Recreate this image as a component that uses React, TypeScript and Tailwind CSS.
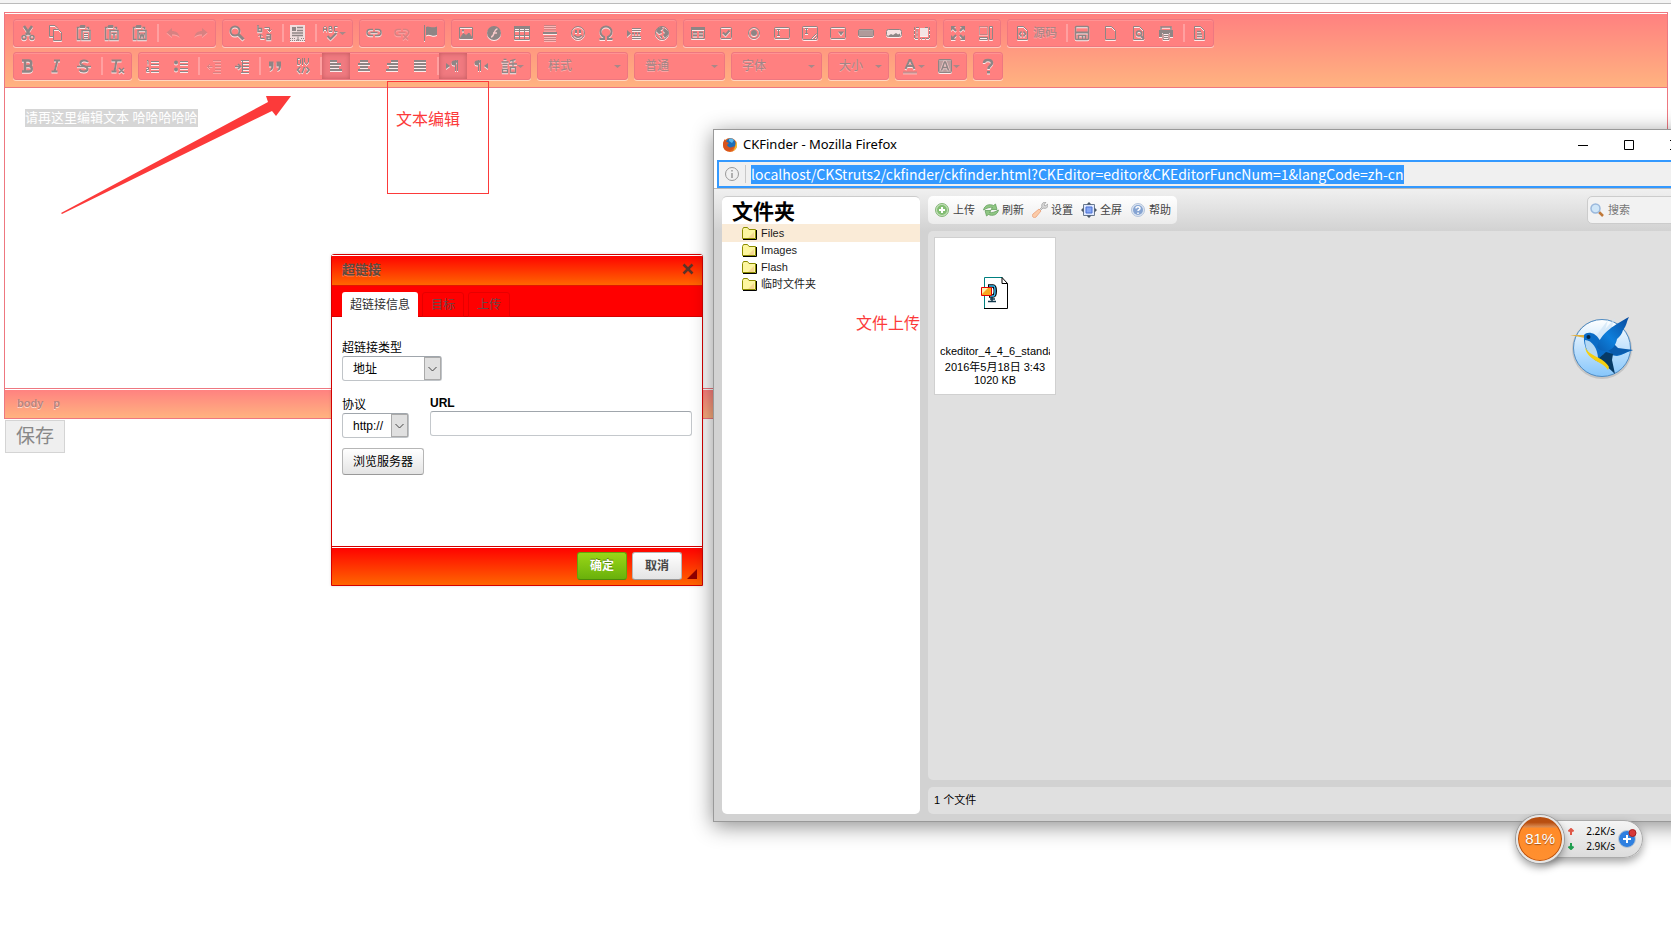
import { ReactNode } from "react";
import clsx from "clsx";

type IconName = keyof typeof glyphs;

const page = <path d="M3.500 1.500h6l4 4v9h-10z" />;
const clipboard = (
  <>
    <path d="M3.500 2.500h-2v12h3M10.500 2.500h2v2" strokeWidth="1.500" />
    <path d="M5 .5h4v2H4V1z" fill="currentColor" />
    <path d="M6 5.500h8v9H6z" strokeWidth="1.500" />
  </>
);
// text-alignment bars: [x, width] for each of the four rows
const bars = (rows: [number, number][]) =>
  rows.map(([x, w], i) => (
    <rect key={i} x={x} y={2 + i * 3} width={w} height={2} fill="currentColor" stroke="none" />
  ));

const glyphs = {
  cut: (
    <>
      <path d="M4 1l6 9M12 1L6 10" strokeWidth="2.500" />
      <circle cx="4" cy="12.500" r="2" strokeWidth="1.500" />
      <circle cx="12" cy="12.500" r="2" strokeWidth="1.500" />
    </>
  ),
  copy: (
    <>
      <path d="M5 11.500H1.500V.5H7l3 3" />
      <path d="M5.500 4.500h5l3 3v8h-8z" />
    </>
  ),
  paste: (
    <>
      {clipboard}
      <path d="M8 8.500h4M8 10.500h4M8 12.500h4" />
    </>
  ),
  pasteText: (
    <>
      {clipboard}
      <path d="M7.500 8.500h5M10 8.500v5" strokeWidth="1.500" />
    </>
  ),
  pasteWord: (
    <>
      {clipboard}
      <path d="M7.500 8l1.200 4.500L10 9l1.300 3.500L12.500 8" strokeWidth="1.300" />
    </>
  ),
  undo: <path d="M7 3v3c4 0 7 2 7.500 6C13 10 10 9.500 7 9.500V12L1.500 7.500z" fill="currentColor" stroke="none" />,
  redo: <path d="M9 3v3c-4 0-7 2-7.500 6C3 10 6 9.500 9 9.500V12l5.500-4.500z" fill="currentColor" stroke="none" />,
  find: (
    <>
      <circle cx="6" cy="6" r="4.500" strokeWidth="2" />
      <path d="M9.500 9.500l5 5" strokeWidth="3" />
    </>
  ),
  replace: (
    <>
      <path d="M1 0v6.500h3.500v-3H1M9.500 9.500h4v5H10V12h3.500" strokeWidth="1.500" />
      <path d="M7.500 2.500h5v4M10.500 4.500l2 2 2-2M7.500 13.500h-4v-4M5.500 11l-2-2-2 2" />
    </>
  ),
  selectAll: (
    <>
      <path d="M0 0h15v16H0z" fill="#f0dede" stroke="none" />
      <path d="M2 2h4v4H2z" fill="currentColor" stroke="none" />
      <path d="M7 2.500h6M7 5.500h6M2 8h11M2 10.500h11" strokeWidth="1.500" />
      <path d="M8 11.500v4M6.500 15h3" />
      <path d="M0 15.500h15M0 13.500h5M11 13.500h4" strokeDasharray="1 1" />
    </>
  ),
  spell: (
    <>
      <path d="M.5 6.500v-4l1-1h1l1 1v4M.5 4.500h3M6 1.500v5M6 1.500h2.500v2H6h3v3H6M14.500 1.500h-3v5h3" />
      <path d="M4.500 11l3 3 6-6" strokeWidth="2" />
    </>
  ),
  link: (
    <>
      <path d="M7 4.500H4a3 3 0 000 6h3M9 4.500h3a3 3 0 010 6H9" strokeWidth="1.500" />
      <path d="M4.500 7.500h7" strokeWidth="1.500" />
    </>
  ),
  unlink: (
    <>
      <path d="M7 4.500H4a3 3 0 000 6h3M9 4.500h3a3 3 0 012 5M4.500 7.500h7" strokeWidth="1.500" />
      <path d="M9 9.500l5 5M14 9.500l-5 5" strokeWidth="1.500" />
    </>
  ),
  anchor: (
    <>
      <path d="M2.500 0v16" />
      <path d="M4 2c3-2 5 2 11-.5v8.500C10 12.500 8 8 4 10.500z" fill="currentColor" stroke="none" />
    </>
  ),
  image: (
    <>
      <path d="M1.500 2.500h13v11h-13z" />
      <path d="M2.500 12.500l3-4 2.500 2 3-2.500 3 4.500z" fill="currentColor" />
      <path d="M4 4.500h2v2H4z" fill="currentColor" stroke="none" />
    </>
  ),
  flash: (
    <>
      <circle cx="8" cy="8" r="7" fill="currentColor" stroke="none" />
      <path d="M11.500 4C7.500 4 8.500 12 5 12M7 8h4" stroke="#f6c8c8" strokeWidth="1.500" />
    </>
  ),
  table: (
    <>
      <path d="M.5 1.500h15v13H.5zM.5 5.500h15M.5 10.500h15M5.500 4v10.500M10.500 4v10.500" />
      <path d="M0 1h16v3H0z" fill="currentColor" stroke="none" />
    </>
  ),
  rule: (
    <>
      <path d="M2 .5h12M2 2.500h12M2 5h12M2 11.500h12M2 13.500h12M2 15.500h12" opacity=".5" />
      <path d="M1 8h14" strokeWidth="2" />
    </>
  ),
  smiley: (
    <>
      <circle cx="8" cy="8" r="6.500" />
      <path d="M5 5h2v3H5zM9 5h2v3H9z" fill="currentColor" stroke="none" />
      <path d="M4.500 10c1 3 6 3 7 0" strokeWidth="1.500" />
    </>
  ),
  omega: <path d="M1.500 14H6v-2C3 10.500 2.500 8.500 2.500 6.500a5.500 5 0 0111 0C13.500 8.500 13 10.500 10 12v2h4.500" strokeWidth="2" />,
  pageBreak: (
    <>
      <path d="M6 3.500h9M6 5.500h9M6 11.500h9M6 13.500h9" />
      <path d="M6 8.500h9" strokeDasharray="2 1" strokeWidth="2" />
      <path d="M1 5l4 3.500L1 12z" fill="currentColor" stroke="none" />
    </>
  ),
  globe: (
    <>
      <circle cx="8" cy="8" r="6.500" />
      <path d="M4 3l4-1.500L9 4 6.500 5.500 8 8 5 9 2 6zM10 3l4 3v4l-3 3-2-3 2-2-2-2zM5 10l3 1v3z" fill="currentColor" stroke="none" />
    </>
  ),
  form: (
    <>
      <path d="M1.500 2.500h13v11h-13z" />
      <path d="M1 2h14v3H1z" fill="currentColor" stroke="none" />
      <path d="M3 7.500h4M9 7.500h4M3 10.500h4M9 10.500h4" strokeWidth="2" />
    </>
  ),
  checkbox: (
    <>
      <rect x="2.500" y="2.500" width="11" height="11" rx="1" />
      <path d="M5 7.500l2.500 2.500L11.500 5.500" strokeWidth="2" />
    </>
  ),
  radio: (
    <>
      <circle cx="8" cy="8" r="5.500" />
      <circle cx="8" cy="8" r="3" fill="currentColor" stroke="none" />
    </>
  ),
  textField: (
    <>
      <rect x=".5" y="2.500" width="15" height="11" rx="1" />
      <path d="M3 4.500h3M4.500 4.500v6M3 10.500h3" />
    </>
  ),
  textarea: (
    <>
      <rect x=".5" y="1.500" width="15" height="13" rx="1" />
      <path d="M3 3.500h3M4.500 3.500v5M3 8.500h3M9.500 13.500l5-5M12.500 13.500l2-2" />
    </>
  ),
  selectField: (
    <>
      <rect x=".5" y="2.500" width="15" height="11" rx="1" />
      <path d="M8 6.500h6l-3 4z" fill="currentColor" stroke="none" />
    </>
  ),
  button: (
    <>
      <rect x=".5" y="4.500" width="15" height="7" rx="1.500" />
      <rect x="1" y="5" width="14" height="6" rx="1" fill="currentColor" stroke="none" opacity=".7" />
    </>
  ),
  imageButton: (
    <>
      <rect x=".5" y="4.500" width="15" height="7" rx="2" fill="#f6e3e3" />
      <path d="M2 11l3-2 2 1 3-2 2 1.500 2-1v2.500z" fill="currentColor" stroke="none" />
    </>
  ),
  hiddenField: (
    <>
      <path d="M5 2.500H.5v11H5M3 4.500v7M11 2.500h4.500v11H6" strokeDasharray="3 1" />
      <path d="M6 3h8v8H6z" fill="#f3e4e4" stroke="none" />
    </>
  ),
  maximize: (
    <>
      <path d="M2 2l4 4M14 2l-4 4M2 14l4-4M14 14l-4-4" strokeWidth="2" />
      <path d="M1 1h5L1 6zM15 1v5l-5-5zM1 15v-5l5 5zM15 15h-5l5-5z" fill="currentColor" stroke="none" />
    </>
  ),
  blocks: (
    <>
      <path d="M1.500 1.500h8v8h-8z" strokeDasharray="1 1" />
      <path d="M11.500 1.500h3v13h-3zM1.500 12.500h8v2h-8z" />
    </>
  ),
  source: (
    <>
      {page}
      <path d="M7.500 6.500L5.500 9l2 2.500M9.500 6.500l2 2.500-2 2.500" strokeWidth="1.500" />
    </>
  ),
  save: (
    <>
      <rect x="1.500" y="1.500" width="13" height="13" rx="1" strokeWidth="1.500" />
      <path d="M1 7.500h14" strokeWidth="2" />
      <path d="M4.500 14v-3.500h7V14M8.500 11v3" strokeWidth="1.500" />
    </>
  ),
  newPage: page,
  preview: (
    <>
      {page}
      <circle cx="9" cy="8.500" r="2.500" strokeWidth="1.500" />
      <path d="M11 11l3 3" strokeWidth="2" />
    </>
  ),
  print: (
    <>
      <path d="M3 5V2h10v3" strokeWidth="1.500" />
      <path d="M1 5h14v7h-3V8H4v4H1z" fill="currentColor" stroke="none" />
      <path d="M5 8.500h6v6H5zM6 10.500h4M6 12.500h4" />
    </>
  ),
  templates: (
    <>
      {page}
      <path d="M6 6.500h4M6 9h5M6 11.500h5" strokeWidth="1.500" />
    </>
  ),
  bold: <path d="M2 2.500h5M2 13.500h5M5 2.500v11M5 2.500h3.500a2.500 2.500 0 010 5.500H5h4a2.500 2.500 0 010 5.500H5" strokeWidth="2.500" />,
  italic: <path d="M6 2.500h6M3.500 13.500h6M9.500 2.500l-3 11" strokeWidth="2" />,
  strike: (
    <>
      <path d="M12 4C10 1.500 4 2 4.500 5.500 5 8 11.500 8 11.500 11S5 14.500 3.500 11.500" strokeWidth="2" />
      <path d="M1 8.500h14" strokeWidth="1.500" />
    </>
  ),
  removeFormat: (
    <>
      <path d="M2.500 2.500h10M7.500 2.500l-2 11M2.500 13.500h5" strokeWidth="2" />
      <path d="M10 10l5 5M15 10l-5 5" strokeWidth="1.500" />
    </>
  ),
  numbered: (
    <>
      <path d="M2 2.500h1v4M1.500 9.500h2v2h-2v2h3" />
      <path d="M6 3.500h8M6 6.500h8M6 10.500h8M6 13.500h8" />
    </>
  ),
  bulleted: (
    <>
      <circle cx="3" cy="4.500" r="2" fill="currentColor" stroke="none" />
      <circle cx="3" cy="11.500" r="2" fill="currentColor" stroke="none" />
      <path d="M7 3.500h8M7 6.500h8M7 10.500h8M7 13.500h8" />
    </>
  ),
  outdent: <path d="M7 2.500h8M9 5.500h6M9 8.500h6M9 11.500h6M7 14.500h8M6.500 8.500H1M4 6L1.500 8.500 4 11" />,
  indent: (
    <>
      <path d="M7 2.500h8M9 5.500h6M9 8.500h6M9 11.500h6M7 14.500h8M8.500 2v12" />
      <path d="M1 8.500h5M4 6l2.500 2.500L4 11" strokeWidth="1.500" />
    </>
  ),
  quote: (
    <path d="M2 3.500h4.500v4C6.500 11 5 12.500 2.500 13c1-1.500 1.800-2.500 1.800-4.500H2zM9.500 3.500H14v4c0 3.500-1.500 5-4 5.500 1-1.500 1.800-2.500 1.800-4.500H9.500z" fill="currentColor" stroke="none" />
  ),
  div: (
    <>
      <path d="M2.500.5h2l1 1v4l-1 1h-2zM7.500 0v7M9.500 0v4l2 2.500 2-2.500V0" />
      <path d="M5 9l-2.500 3L5 15M11.500 9l2.500 3-2.500 3M9.500 9l-2.500 6" strokeWidth="1.500" />
    </>
  ),
  left: bars([[2, 7], [2, 11], [2, 9], [2, 12]]),
  center: bars([[4, 8], [2, 12], [4, 8], [2, 12]]),
  right: bars([[7, 7], [3, 11], [5, 9], [2, 12]]),
  justify: bars([[2, 12], [2, 12], [2, 12], [2, 12]]),
  ltr: (
    <>
      <path d="M1 5l4 3-4 3z" fill="currentColor" stroke="none" />
      <path d="M13 2.500H9a2.500 2.500 0 000 5h1z" fill="currentColor" stroke="none" />
      <path d="M10.500 2v11M12.500 2v11" />
    </>
  ),
  rtl: (
    <>
      <path d="M15 5l-4 3 4 3z" fill="currentColor" stroke="none" />
      <path d="M8 2.500H4a2.500 2.500 0 000 5h1z" fill="currentColor" stroke="none" />
      <path d="M5.500 2v11M7.500 2v11" />
    </>
  ),
  language: (
    <path d="M2.500 1.500h3M.5 4h7M1.500 6.500h5M1.500 9h5M1.500 11.500h5v3h-5zM14.500 1.500L9 3M8 6h8M12 2.500v7M9.500 9.500h5v5h-5z" strokeWidth="1.300" />
  ),
  textColor: (
    <>
      <path d="M3.500 11L7.500 2h1l4 9M5.500 8h5" strokeWidth="2" />
      <path d="M1 14.500h14" strokeWidth="2" opacity=".5" />
    </>
  ),
  bgColor: (
    <>
      <rect x="1.500" y="1.500" width="13" height="13" rx="1" fillOpacity=".6" fill="currentColor" />
      <path d="M4.500 12.500L7.500 4h1l3 8.500M6 9.500h4" stroke="#f0c4c4" strokeWidth="3" />
      <path d="M4.500 12.500L7.500 4h1l3 8.500M6 9.500h4" strokeWidth="1.500" />
    </>
  ),
  about: (
    <>
      <path d="M4 5c0-4 8-4 8 0 0 2.500-3.500 2.500-3.500 6" strokeWidth="2.500" />
      <path d="M7 13h3v2.500H7z" fill="currentColor" stroke="none" />
    </>
  ),
};

type Tool = IconName | "|";

const groupsTop: Tool[][] = [
  ["cut", "copy", "paste", "pasteText", "pasteWord", "|", "undo", "redo"],
  ["find", "replace", "|", "selectAll", "|", "spell"],
  ["link", "unlink", "anchor"],
  ["image", "flash", "table", "rule", "smiley", "omega", "pageBreak", "globe"],
  ["form", "checkbox", "radio", "textField", "textarea", "selectField", "button", "imageButton", "hiddenField"],
  ["maximize", "blocks"],
  ["source", "|", "save", "newPage", "preview", "print", "|", "templates"],
];

const groupsBottom: Tool[][] = [
  ["bold", "italic", "strike", "|", "removeFormat"],
  ["numbered", "bulleted", "|", "outdent", "indent", "|", "quote", "div", "|", "left", "center", "right", "justify", "|", "ltr", "rtl", "language"],
];

const disabled: Tool[] = ["undo", "redo", "unlink", "outdent"];
const pressed: Tool[] = ["left", "ltr"];
const withMenu: Tool[] = ["spell", "language", "textColor", "bgColor"];

function Caret() {
  return (
    <svg className="pointer-events-none h-[3px] w-[7px] shrink-0" viewBox="0 0 7 3" fill="#a88888">
      <path d="M0 0h7L3.500 3z" />
    </svg>
  );
}

function ToolGroup({ children }: { children: ReactNode }) {
  return (
    <div className="flex h-7 rounded-[3px] border border-[#ee7780] bg-[#ff8080] shadow-[0_1px_0_rgba(255,255,255,.5),inset_0_1px_0_rgba(255,255,255,.15)]">
      {children}
    </div>
  );
}

function ToolButton({ name }: { name: Tool }) {
  if (name === "|") {
    return <span className="mt-1 ml-[3px] h-[18px] w-[2px] bg-[#ffa0a0]" />;
  }
  return (
    <button
      aria-label={name}
      className={clsx(
        "flex items-center px-[6px] text-[#8e8585]",
        pressed.includes(name) && "bg-[#f07a80] shadow-[inset_0_0_5px_rgba(120,40,40,.4)]",
        disabled.includes(name) && "opacity-35"
      )}
    >
      <svg
        className="size-4 shrink-0 drop-shadow-[0_1px_0_rgba(255,255,255,.85)]"
        viewBox="0 0 16 16"
        fill="none"
        stroke="currentColor"
      >
        {glyphs[name]}
      </svg>
      {name === "source" && (
        <span className="pl-[3px] text-xs text-[#a08686] [text-shadow:0_1px_0_rgba(255,255,255,.35)]">源码</span>
      )}
      {withMenu.includes(name) && <Caret />}
    </button>
  );
}

function Combo({ label, className }: { label: string; className: string }) {
  return (
    <ToolGroup>
      <div className={clsx("relative flex items-center", className)}>
        <select
          aria-label={label}
          className="size-full appearance-none pl-[10px] text-xs text-[#a08686] outline-none [text-shadow:0_1px_0_rgba(255,255,255,.35)]"
        >
          <option>{label}</option>
        </select>
        <span className="pointer-events-none absolute right-[6px]">
          <Caret />
        </span>
      </div>
    </ToolGroup>
  );
}

function Editor() {
  return (
    <section className="mt-2 mr-[3px] ml-1 border border-[#ee7780]">
      <div className="flex flex-col gap-[5px] border-b border-[#ee7780] bg-[linear-gradient(#ff8080,#ffb380)] px-2 pt-[6px] pb-[7px] shadow-[inset_0_1px_0_#fff]">
        <div className="flex gap-[6px]">
          {groupsTop.map((group, i) => (
            <ToolGroup key={i}>
              {group.map((name, j) => (
                <ToolButton key={j} name={name} />
              ))}
            </ToolGroup>
          ))}
        </div>
        <div className="flex gap-[6px]">
          {groupsBottom.map((group, i) => (
            <ToolGroup key={i}>
              {group.map((name, j) => (
                <ToolButton key={j} name={name} />
              ))}
            </ToolGroup>
          ))}
          <Combo label="样式" className="w-[89px]" />
          <Combo label="普通" className="w-[89px]" />
          <Combo label="字体" className="w-[89px]" />
          <Combo label="大小" className="w-[59px]" />
          <ToolGroup>
            <ToolButton name="textColor" />
            <ToolButton name="bgColor" />
          </ToolGroup>
          <ToolGroup>
            <ToolButton name="about" />
          </ToolGroup>
        </div>
      </div>
      <div className="h-[300px] px-5 py-[21px] text-[13px] leading-[18px]">
        <p>
          <span className="inline-block bg-[#d6d6d6] text-white">请再这里编辑文本 哈哈哈哈哈</span>
        </p>
      </div>
      <div className="flex h-[30px] items-center gap-[10px] border-t border-[#ee7780] bg-[linear-gradient(#ff8080,#ffb380)] px-3 text-[11px] font-bold text-[#b88480] shadow-[inset_0_1px_0_#fff] [text-shadow:0_1px_0_rgba(255,255,255,.6)]">
        <a href="#body">body</a>
        <a href="#p">p</a>
      </div>
    </section>
  );
}

function DialogSelect({ id, label, value, className }: { id: string; label: string; value: string; className: string }) {
  return (
    <div className="flex flex-col">
      <label htmlFor={id} className="h-4 leading-4">
        {label}
      </label>
      <div className={clsx("relative h-[25px]", className)}>
        <select
          id={id}
          className="size-full appearance-none rounded-[3px] border border-[#c0c4c8] border-t-[#a0a6ac] bg-white pl-[10px] outline-none"
        >
          <option>{value}</option>
        </select>
        <span className="pointer-events-none absolute inset-y-px right-px flex w-[17px] items-center justify-center border border-[#aaa] bg-[#e0e0e0]">
          <svg className="h-[6px] w-[9px]" viewBox="0 0 9 6" fill="none" stroke="#444">
            <path d="M.5 1l4 4 4-4" />
          </svg>
        </span>
      </div>
    </div>
  );
}

function LinkDialog() {
  return (
    <div
      role="dialog"
      className="absolute top-[254px] left-[331px] w-[372px] rounded-t-[3px] border border-[#d40000] bg-white text-xs text-black shadow-[0_0_3px_rgba(0,0,0,.15)]"
    >
      <div className="flex h-[31px] items-center justify-between border-b border-[#e01800] bg-[linear-gradient(#ff0000,#ff6600)] pr-2 pl-[10px] shadow-[inset_0_1px_0_#fff]">
        <h2 className="text-[13px] font-bold text-[#5c4a40] [text-shadow:0_1px_0_rgba(255,255,255,.3)]">超链接</h2>
        <button aria-label="关闭" className="pb-[3px]">
          <svg className="size-3" viewBox="0 0 12 12" fill="none" stroke="#5a3428" strokeWidth="2.500">
            <path d="M1.500 1.500l9 9M10.500 1.500l-9 9" />
          </svg>
        </button>
      </div>
      <div className="flex h-[31px] items-end gap-1 bg-[#ff0000] px-[10px] shadow-[inset_0_-1px_0_#d40000]">
        <button className="h-[25px] rounded-t-[3px] bg-white px-2 text-[#303030]">超链接信息</button>
        <button className="h-[25px] rounded-t-[3px] border border-[#e60000] px-2 text-[#6e4646]">目标</button>
        <button className="h-[25px] rounded-t-[3px] border border-[#e60000] px-2 text-[#6e4646]">上传</button>
      </div>
      <div className="flex h-[229px] flex-col items-start px-[10px] pt-[23px]">
        <DialogSelect id="link-type" label="超链接类型" value="地址" className="w-[100px]" />
        <div className="mt-[14px] flex items-start gap-[21px]">
          <div className="pt-[2px]">
            <DialogSelect id="protocol" label="协议" value="http://" className="w-[67px]" />
          </div>
          <div className="flex flex-col">
            <label htmlFor="url" className="h-4 font-bold leading-4">
              URL
            </label>
            <input
              id="url"
              className="h-[25px] w-[262px] rounded-[3px] border border-[#c4c8cc] border-t-[#a0a6ac] px-2 outline-none"
            />
          </div>
        </div>
        <button className="mt-[10px] h-[27px] rounded-[3px] border border-[#b6b6b6] border-b-[#999] bg-linear-to-b from-white to-[#e4e4e4] px-[10px]">
          浏览服务器
        </button>
      </div>
      <div className="flex h-[39px] items-center justify-end gap-[5px] border-t border-[#d40000] bg-[linear-gradient(#ff0000,#ff6600)] pr-[5px] font-bold shadow-[inset_0_1px_0_#fff]">
        <button className="h-7 w-[50px] rounded-[3px] border border-[#62a60a] border-b-[#4d8a08] bg-linear-to-b from-[#9ad717] to-[#69b10b] text-white [text-shadow:0_-1px_0_#55830c]">
          确定
        </button>
        <button className="h-7 w-[50px] rounded-[3px] border border-[#b6b6b6] border-b-[#999] bg-linear-to-b from-white to-[#e4e4e4] text-[#474747]">
          取消
        </button>
        <svg className="mb-[6px] size-[10px] self-end" viewBox="0 0 10 10" fill="#900000">
          <path d="M10 0v10H0z" />
        </svg>
      </div>
    </div>
  );
}

const finderTools = [
  {
    label: "上传",
    icon: (
      <>
        <circle cx="8" cy="8" r="6.500" fill="#c4e2ba" stroke="#85b678" />
        <circle cx="8" cy="8" r="5" fill="#82bd72" />
        <path d="M8 5v6M5 8h6" stroke="#fff" strokeWidth="2" />
      </>
    ),
  },
  {
    label: "刷新",
    icon: (
      <>
        <path d="M.5 8c1-5 6-6.500 10-4.500l2-1.500 1.500 5.500H8l1.500-2C7 5 4 6 .5 8z" fill="#8fc683" stroke="#5b9a55" strokeWidth=".7" />
        <path d="M15.500 8c-1 5-6 6.500-10 4.500l-2 1.500L2 8.500h6l-1.500 2C9 11 12 10 15.500 8z" fill="#8fc683" stroke="#5b9a55" strokeWidth=".7" />
      </>
    ),
  },
  {
    label: "设置",
    icon: (
      <>
        <path d="M7 8l3-3c-1-3 1-5 4-5l-2 3 1 1 3-2c0 4-2 5-5 4L8 9z" fill="#d8d8d8" stroke="#999" strokeWidth=".7" />
        <path d="M7 7l2 2-5 6c-2 2-5-1-3-3z" fill="#fbcba8" stroke="#e8a078" strokeWidth=".8" />
      </>
    ),
  },
  {
    label: "全屏",
    icon: (
      <>
        <path d="M2.500 2.500h11v11h-11z" fill="#dfe8ff" stroke="#6a7a90" />
        <path d="M5 5h6v6H5z" fill="#86a6f4" stroke="#4a70d0" />
        <path d="M8 0l2.500 2.500h-5zM8 16l2.500-2.500h-5zM0 8l2.500-2.500v5zM16 8l-2.500-2.500v5z" fill="#4a5868" />
      </>
    ),
  },
  {
    label: "帮助",
    icon: (
      <>
        <circle cx="8" cy="8" r="6.500" fill="#dde6f2" stroke="#b4c4dc" />
        <circle cx="8" cy="8" r="5" fill="#86a4d2" />
        <path d="M6 6.500c0-2.500 4-2 4 0 0 1.500-2 1-2 2.500M8 10.500V12" stroke="#fff" strokeWidth="1.500" fill="none" />
      </>
    ),
  },
];

function FolderIcon() {
  return (
    <svg className="h-[13px] w-[15px] shrink-0" viewBox="0 0 15 13">
      <path d="M14.500 3v9.500H1" fill="none" stroke="#000" />
      <path d="M.5 11.500v-9l1-2h4l1.500 2h6.500v9z" fill="#fdf6a0" stroke="#8c8c00" />
      <path d="M12 5l-6 6h6z" fill="#f6d890" />
    </svg>
  );
}

function FileIcon() {
  return (
    <svg className="h-8 w-7" viewBox="0 0 28 32">
      <path d="M3.500 31V.5h18" fill="none" stroke="#008080" />
      <path d="M4 1h17l5 6v24H4z" fill="#fff" />
      <path d="M21 .5v6h5.500V31.500H3M21 .5l5.500 6" fill="none" stroke="#000" />
      <path d="M7 9h5c3 0 3 10 0 10H8" fill="none" stroke="#000" strokeWidth="3.500" />
      <path d="M8 9h4.500c2 0 2 10 0 10H9" fill="none" stroke="#3cb8f0" strokeWidth="1.500" />
      <path d="M11 20v4M7 24.500h8M9 22h5" stroke="#10384c" strokeWidth="1.500" />
      <path d="M.5 10.500h10v8H.5z" fill="#f8a820" stroke="#e00000" />
      <path d="M1 11h6l-6 6z" fill="#fff0b0" />
    </svg>
  );
}

function FinderWindow() {
  return (
    <div className="absolute top-[129px] -right-[28px] left-[713px] flex flex-col border border-[#999] bg-white shadow-[0_4px_20px_rgba(0,0,0,.45)]">
      <div className="flex h-[30px] items-center pl-[9px]">
        <svg className="size-[14px]" viewBox="0 0 14 14">
          <circle cx="7" cy="7" r="7" fill="#e2661c" />
          <circle cx="7.500" cy="5.500" r="5" fill="#1d6fb8" />
          <path d="M6 1c2-1 4 0 5 1L9 5 6 3z" fill="#5cb8ec" />
          <path d="M0 6c0-2 1-4 2-5 0 2 1 2 2 3l2 1-2 2c1 3 5 3 7 1-1 5-6 6-9 4C1 11 0 9 0 6z" fill="#d8521c" />
          <path d="M13 3c2 4 1 8-3 10 2-3 3-6 3-10z" fill="#f7c430" />
        </svg>
        <h1 className="pl-[6px] font-['Noto_Sans','Noto_Sans_CJK_SC',sans-serif] text-[13px] text-black">
          CKFinder - Mozilla Firefox
        </h1>
        <div className="ml-auto flex h-full">
          {[<path key="min" d="M0 5.500h10" />, <path key="max" d="M.5.5h9v9h-9z" />, <path key="x" d="M0 0l10 10M10 0L0 10" />].map(
            (shape) => (
              <button key={shape.key} aria-label={shape.key ?? ""} className="flex w-[46px] items-center justify-center">
                <svg className="size-[10px]" viewBox="0 0 10 10" fill="none" stroke="#000">
                  {shape}
                </svg>
              </button>
            )
          )}
        </div>
      </div>
      <div className="border-b border-[#b8b8b8] pl-[3px]">
        <div className="flex h-7 items-center border-2 border-[#3399ff] bg-[#f0f0f0] pl-[6px]">
          <svg className="size-[14px]" viewBox="0 0 14 14" fill="none" stroke="#999">
            <circle cx="7" cy="7" r="6.500" />
            <path d="M7 6v5M7 3v1.500" strokeWidth="1.500" />
          </svg>
          <span className="mr-[5px] ml-[6px] h-[18px] w-px bg-[#c8c8c8]" />
          <input
            aria-label="地址"
            readOnly
            value="localhost/CKStruts2/ckfinder/ckfinder.html?CKEditor=editor&CKEditorFuncNum=1&langCode=zh-cn"
            className="field-sizing-content h-[19px] bg-[#3399ff] font-['Noto_Sans_CJK_SC',sans-serif] text-sm text-white outline-none"
          />
        </div>
      </div>
      <div className="flex gap-2 bg-[#d2d2d2] bg-[linear-gradient(#f0f0f0,#d2d2d2_42px)] px-2 py-[7px]">
        <aside className="w-[198px] shrink-0 rounded-[5px] border-t border-[#ccc] bg-white text-[11px]">
          <h2 className="h-[27px] pl-[10px] text-[21px] leading-[30px] font-bold text-black">文件夹</h2>
          <ul>
            {["Files", "Images", "Flash", "临时文件夹"].map((name, i) => (
              <li
                key={name}
                className={clsx("flex items-center gap-1 pl-5", i === 0 ? "h-[18px] bg-[#faebd7]" : "h-[17px]")}
              >
                <FolderIcon />
                <a href={`#${name}`} className="text-[#1a1a1a]">
                  {name}
                </a>
              </li>
            ))}
          </ul>
        </aside>
        <div className="flex min-w-0 flex-1 flex-col gap-[7px] text-[11px]">
          <div className="flex justify-between">
            <div className="flex h-7 gap-2 rounded-[5px] bg-linear-to-b from-white to-[#ececec] px-[6px]">
              {finderTools.map((tool) => (
                <button key={tool.label} className="flex items-center gap-[3px] text-[#444]">
                  <svg className="size-4" viewBox="0 0 16 16">
                    {tool.icon}
                  </svg>
                  {tool.label}
                </button>
              ))}
            </div>
            <label className="flex h-7 w-[103px] items-center gap-1 rounded-[5px] border border-[#ccc] bg-[#f2f2f2] pl-[2px]">
              <svg className="size-[14px] shrink-0" viewBox="0 0 14 14">
                <path d="M9 9l4 4" stroke="#c07838" strokeWidth="2.500" />
                <circle cx="5.500" cy="5.500" r="4.500" fill="#cfe6f8" stroke="#9ab8dc" strokeWidth="1.500" />
              </svg>
              <input aria-label="搜索" placeholder="搜索" className="w-full min-w-0 outline-none placeholder:text-[#777]" />
            </label>
          </div>
          <div className="h-[549px] rounded-[5px] bg-[#e0e0e0] p-[6px]">
            <figure className="flex h-[158px] w-[122px] flex-col items-center border border-[#d0d0d0] bg-white pt-[39px] leading-[13px] text-black">
              <FileIcon />
              <figcaption className="mt-9 flex w-[110px] flex-col items-center">
                <span className="w-full overflow-hidden whitespace-nowrap">ckeditor_4_4_6_standard.zip</span>
                <span className="mt-[3px]">2016年5月18日 3:43</span>
                <span>1020 KB</span>
              </figcaption>
            </figure>
          </div>
          <div className="flex h-[27px] items-center rounded-[5px] bg-[#e0e0e0] pl-[6px] text-black">1 个文件</div>
        </div>
      </div>
    </div>
  );
}

function BirdLogo() {
  return (
    <svg className="absolute top-[315px] right-[36px] size-[65px]" viewBox="0 0 65 65">
      <defs>
        <linearGradient id="disc" x1="0" y1="0" x2="0" y2="1">
          <stop offset="0" stopColor="#fff" />
          <stop offset="1" stopColor="#86c6fb" />
        </linearGradient>
        <linearGradient id="wing" x1="1" y1="0" x2="0" y2="1">
          <stop offset="0" stopColor="#0a4a9c" />
          <stop offset=".6" stopColor="#0d7fdc" />
          <stop offset="1" stopColor="#0a5cb0" />
        </linearGradient>
      </defs>
      <circle cx="32" cy="34" r="30" fill="#000" opacity=".12" />
      <circle cx="32" cy="33" r="28.500" fill="url(#disc)" stroke="#4f8cc4" />
      <path d="M25 22L38 5l-6 20zM30 20L45 3l-8 22z" fill="#cfe4f6" opacity=".7" />
      <path d="M0 20l15 0v3z" fill="#e0b040" />
      <path d="M14 20c3-4 11-3 15 4l8 10 26 1c-7 2-10 5-16 6l-13-2-5 8C19 43 13 32 14 20z" fill="#0b6cc6" />
      <path d="M37 34l7-5 4 4 15 2c-8 2-13 6-20 5z" fill="#0a5cae" />
      <path d="M36 37l7 2-1 6 3 14C38 52 32 48 28 44z" fill="#063a66" />
      <path d="M15 25c7 0 13 9 13 19C19 42 15 34 15 25z" fill="#b4d8f4" />
      <path d="M15 32c4 10 18 9 24 20l-1 3c-5-9-21-9-23-23z" fill="#f5cf10" />
      <path d="M27 32C30 18 46 9 59 2c-3 6-2 8-6 13-1 4-3 6-6 9-1 5-4 12-12 12-3 0-6-1-8-4z" fill="url(#wing)" />
      <circle cx="18.500" cy="22" r="2" fill="#04264a" />
    </svg>
  );
}

function NetSpeed() {
  return (
    <div className="absolute top-[815px] right-[28px] flex items-center">
      <div className="z-10 flex size-12 items-center justify-center rounded-full border-2 border-[#e6e6e6] bg-[linear-gradient(#b84e10_12%,#d88850_22%,#ff8a28_26%,#ff9030)] text-[15px] text-white shadow-[0_0_0_1px_#999,inset_0_0_0_1px_#b85010,0_4px_8px_rgba(0,0,0,.4)] [text-shadow:0_1px_1px_rgba(100,40,0,.6)]">
        81%
      </div>
      <div className="-ml-6 flex h-[38px] items-center rounded-r-full border border-[#aaa] bg-linear-to-b from-[#f4f4f4] to-[#dcdcdc] pr-[6px] pl-[27px] font-['Noto_Sans',sans-serif] text-[10px] leading-[15px] text-black shadow-[0_4px_8px_rgba(0,0,0,.35)]">
        <svg className="h-[22px] w-[6px]" viewBox="0 0 6 22" fill="none" strokeWidth="2">
          <path d="M3 7V1M.5 3.500L3 1l2.500 2.500" stroke="#e05848" />
          <path d="M3 15v6M.5 18.500L3 21l2.500-2.500" stroke="#20a050" />
        </svg>
        <div className="ml-3">
          <p>2.2K/s</p>
          <p>2.9K/s</p>
        </div>
        <svg className="ml-[3px] size-[18px] overflow-visible" viewBox="0 0 18 18">
          <circle cx="9" cy="9" r="8.500" fill="#2f80e0" stroke="#c0c8d0" />
          <path d="M9 5v8M5 9h8" stroke="#fff" strokeWidth="2" />
          <circle cx="14.500" cy="3" r="3.500" fill="#d83838" stroke="#a82020" />
        </svg>
      </div>
    </div>
  );
}

export default function App() {
  return (
    <main className="relative min-h-screen overflow-hidden bg-white font-['Liberation_Sans','Noto_Sans_CJK_SC',sans-serif]">
      <div className="h-1 border-b border-[#bbb] bg-[#f4f4f4]" />
      <Editor />
      <button className="mt-px ml-[5px] h-[33px] border border-[#d4d4d4] bg-[#efefef] px-[10px] text-[19px] leading-[31px] text-[#888]">
        保存
      </button>

      <LinkDialog />
      <FinderWindow />

      {/* red markup drawn over the windows */}
      <svg className="pointer-events-none absolute top-[96px] left-[61px] h-[118px] w-[230px]" viewBox="0 0 230 118">
        <path d="M0 117L207 6l-2-6h25l-15 20-4-5L1 118z" fill="#fc3a3a" />
      </svg>
      <div className="pointer-events-none absolute top-[81px] left-[387px] h-[113px] w-[102px] border border-[#fc3a3a] pt-[26px] pl-2 text-base text-[#fc3a3a]">
        文本编辑
      </div>
      <p className="pointer-events-none absolute top-[312px] left-[856px] text-base text-[#fc3a3a]">文件上传</p>

      <BirdLogo />
      <NetSpeed />
    </main>
  );
}
